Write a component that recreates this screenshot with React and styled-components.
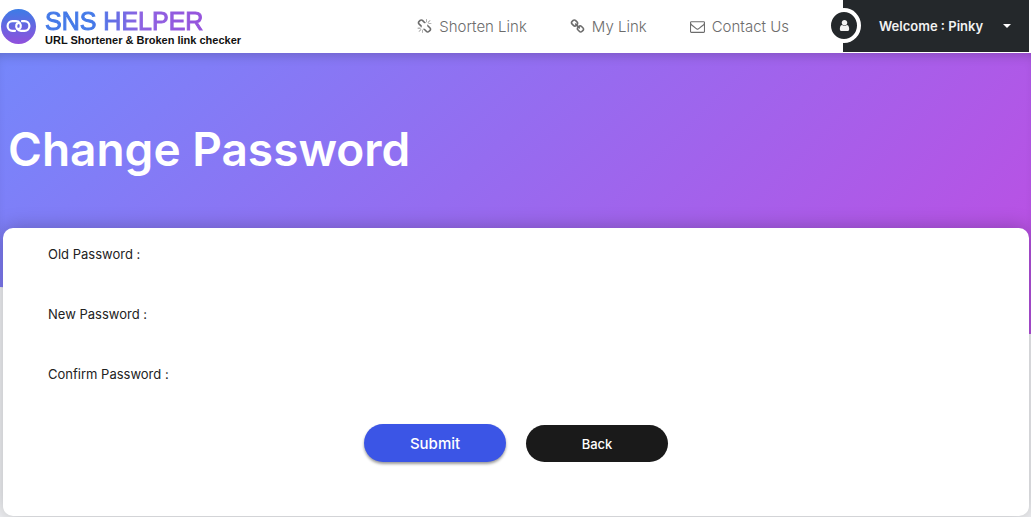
import React from "react";
import styled, { createGlobalStyle } from "styled-components";

const GlobalStyle = createGlobalStyle`
  * {
    box-sizing: border-box;
  }

  body {
    margin: 0;
    background-color: #f0f1f4;
    font-family: Inter, "Open Sans", sans-serif;
  }
`;

const Header = styled.header`
  display: flex;
  align-items: center;
  height: 53px;
  padding-right: 2px;
  background-color: #fff;
`;

const Brand = styled.a`
  display: flex;
  align-items: center;
  gap: 8px;
  margin-right: auto;
  text-decoration: none;
  white-space: nowrap;
`;

const BrandText = styled.span`
  display: flex;
  flex-direction: column;
  font-family: "Liberation Sans", Arial, sans-serif;
`;

const BrandName = styled.span`
  align-self: flex-start;
  background: linear-gradient(90deg, #4379e8 30%, #8d63e2 60%, #9652dc);
  background-clip: text;
  color: transparent;
  font-size: 25px;
  line-height: 26px;
  -webkit-text-stroke: 1px transparent;
`;

const Tagline = styled.span`
  color: #111;
  font-size: 11px;
  font-weight: bold;
  line-height: 12px;
`;

const Nav = styled.nav`
  display: flex;
  gap: 43px;
  margin-right: 54px;
`;

const NavLink = styled.a`
  display: flex;
  align-items: center;
  gap: 7px;
  color: #6c6c6c;
  font-size: 15px;
  font-weight: 300;
  line-height: 24px;
  text-decoration: none;
  white-space: nowrap;
`;

const UserButton = styled.button`
  position: relative;
  display: flex;
  align-items: center;
  align-self: flex-start;
  justify-content: space-between;
  width: 186px;
  height: 52px;
  padding: 0 18px 0 36px;
  border: none;
  background-color: #24282b;
  color: #f2f2f2;
  font-family: inherit;
  font-size: 13px;
  font-weight: 600;
  white-space: nowrap;
`;

const Avatar = styled.span`
  position: absolute;
  top: 8px;
  left: -16px;
  display: flex;
  align-items: center;
  justify-content: center;
  width: 34px;
  height: 35px;
  border: 4px solid #fff;
  border-radius: 50%;
  background-color: #24282b;
`;

const Caret = styled.span`
  border-top: 4px solid #fff;
  border-right: 4px solid transparent;
  border-left: 4px solid transparent;
`;

const Hero = styled.section`
  height: 281px;
  padding: 60px 8px 0;
  background: linear-gradient(135deg, #7587fb, #956cf0 45%, #b852e4 92%);
  box-shadow: inset 0 8px 12px -6px rgba(0, 0, 0, 0.2);
  clip-path: polygon(0 0, 100% 0, 100% 100%, 60% 100%, 0 234px);
`;

const Title = styled.h1`
  margin: 0;
  color: #fff;
  font-size: 46px;
  font-weight: 600;
  line-height: 72px;
`;

const Card = styled.form`
  position: relative;
  margin: -106px 2px 1px 3px;
  padding: 12px 45px 54px;
  border-radius: 10px;
  background-color: #fff;
  box-shadow: 0 0 20px rgba(0, 0, 0, 0.25);
`;

const Field = styled.div`
  display: flex;
  align-items: flex-start;
  height: 60px;
`;

const Label = styled.label`
  flex: 0 0 150px;
  color: #222;
  font-size: 13px;
  line-height: 28px;
`;

const PasswordInput = styled.input`
  flex: 1;
  height: 28px;
  border: none;
  outline: none;
  background: transparent;
`;

const Actions = styled.div`
  display: flex;
  align-items: flex-end;
  justify-content: center;
  gap: 20px;
  margin-top: 4px;
`;

const Button = styled.button`
  width: 142px;
  height: ${(props) => (props.$primary ? "38px" : "37px")};
  border: none;
  border-radius: 19px;
  background-color: ${(props) => (props.$primary ? "#3b55e6" : "#1a1a1a")};
  box-shadow: ${(props) => (props.$primary ? "0 2px 3px rgba(0, 0, 0, 0.4)" : "none")};
  color: #fff;
  font-family: inherit;
  font-size: ${(props) => (props.$primary ? "15px" : "13px")};
  font-weight: 500;
`;

const icons = {
  unlink:
    "M503 1271l-256 256q-10 9-23 9-12 0-23-9-9-10-9-23t9-23l256-256q10-9 23-9t23 9q9 10 9 23t-9 23zm169 41v320q0 14-9 23t-23 9-23-9-9-23v-320q0-14 9-23t23-9 23 9 9 23zm-224-224q0 14-9 23t-23 9h-320q-14 0-23-9t-9-23 9-23 23-9h320q14 0 23 9t9 23zm1264 128q0 120-85 203l-147 146q-83 83-203 83-121 0-204-85l-334-335q-21-21-42-56l239-18 273 274q28 28 68 27.5t68-27.5l147-146q28-28 28-67 0-40-28-68l-274-275 18-239q35 21 56 42l336 336q84 86 84 204zm-617-724l-239 18-273-274q-28-28-68-28-39 0-68 27l-147 146q-28 28-28 67 0 40 28 68l274 274-18 240q-35-21-56-42l-336-336q-84-86-84-204 0-120 85-203l147-146q83-83 203-83 121 0 204 85l334 335q21 21 42 56zm633 84q0 14-9 23t-23 9h-320q-14 0-23-9t-9-23 9-23 23-9h320q14 0 23 9t9 23zm-544-544v320q0 14-9 23t-23 9-23-9-9-23v-320q0-14 9-23t23-9 23 9 9 23zm407 151l-256 256q-11 9-23 9t-23-9q-9-10-9-23t9-23l256-256q10-9 23-9t23 9q9 10 9 23t-9 23z",
  link:
    "M1520 1216q0-40-28-68l-208-208q-28-28-68-28-42 0-72 32 3 3 19 18.5t21.5 21.5 15 19 13 25.5 3.5 27.5q0 40-28 68t-68 28q-15 0-27.5-3.5t-25.5-13-19-15-21.5-21.5-18.5-19q-33 31-33 73 0 40 28 68l206 207q27 27 68 27 40 0 68-26l147-146q28-28 28-67zm-703-705q0-40-28-68l-206-207q-28-28-68-28-39 0-68 27l-147 146q-28 28-28 67 0 40 28 68l208 208q27 27 68 27 42 0 72-31-3-3-19-18.5t-21.5-21.5-15-19-13-25.5-3.5-27.5q0-40 28-68t68-28q15 0 27.5 3.5t25.5 13 19 15 21.5 21.5 18.5 19q33-31 33-73zm895 705q0 120-85 203l-147 146q-83 83-203 83-121 0-204-85l-206-207q-83-83-83-203 0-123 88-209l-88-88q-86 88-208 88-120 0-204-84l-208-208q-84-84-84-204t85-203l147-146q83-83 203-83 121 0 204 85l206 207q83 83 83 203 0 123-88 209l88 88q86-88 208-88 120 0 204 84l208 208q84 84 84 204z",
  envelope:
    "M1664 1504v-768q-32 36-69 66-268 206-426 338-51 43-83 67t-86.5 48.5-102.5 24.5h-2q-48 0-102.5-24.5t-86.5-48.5-83-67q-158-132-426-338-37-30-69-66v768q0 13 9.5 22.5t22.5 9.5h1472q13 0 22.5-9.5t9.5-22.5zm0-1051v-24.5l-.5-13-3-12.5-5.5-9-9-7.5-14-2.5h-1472q-13 0-22.5 9.5t-9.5 22.5q0 168 147 284 193 152 401 317 6 5 35 29.5t46 37.5 44.5 31.5 50.5 27.5 43 9h2q20 0 43-9t50.5-27.5 44.5-31.5 46-37.5 35-29.5q208-165 401-317 54-43 100.5-115.5t46.5-131.5zm128-37v1088q0 66-47 113t-113 47h-1472q-66 0-113-47t-47-113v-1088q0-66 47-113t113-47h1472q66 0 113 47t47 113z",
  user:
    "M1536 1399q0 109-62.5 187t-150.5 78h-854q-88 0-150.5-78t-62.5-187q0-85 8.5-160.5t31.5-152 58.5-131 94-89 134.5-34.5q131 128 313 128t313-128q76 0 134.5 34.5t94 89 58.5 131 31.5 152 8.5 160.5zm-256-887q0 159-112.5 271.5t-271.5 112.5-271.5-112.5-112.5-271.5 112.5-271.5 271.5-112.5 271.5 112.5 112.5 271.5z",
};

const Icon = ({ name, size = 15 }) => (
  <svg width={size} height={size} viewBox="0 0 1792 1792" fill="currentColor" aria-hidden="true">
    <path d={icons[name]} />
  </svg>
);

const Logo = () => (
  <svg width="37" height="37" viewBox="0 0 37 37" aria-hidden="true">
    <defs>
      <linearGradient id="logo" x1="0" y1="0" x2="0" y2="1">
        <stop offset="0" stopColor="#3c7ce6" />
        <stop offset="1" stopColor="#9150dc" />
      </linearGradient>
    </defs>
    <circle cx="18.5" cy="18.5" r="17.5" fill="url(#logo)" />
    <g fill="none" stroke="#fff" strokeWidth="2.2" strokeLinecap="round">
      <path d="M15 22.800h-2.600a4.800 4.800 0 0 1 0-9.600h3.600a4.800 4.800 0 0 1 4.600 6.200q-.6 1.500-2 1.500" />
      <path d="M22 13.200h2.600a4.800 4.800 0 0 1 0 9.600h-3.600a4.800 4.800 0 0 1-4.600-6.200q.6-1.500 2-1.500" />
    </g>
  </svg>
);

const links = [
  { icon: "unlink", text: "Shorten Link" },
  { icon: "link", text: "My Link" },
  { icon: "envelope", text: "Contact Us" },
];

const fields = [
  { id: "oldPassword", label: "Old Password :" },
  { id: "newPassword", label: "New Password :" },
  { id: "confirmPassword", label: "Confirm Password :" },
];

class App extends React.Component {
  state = {
    oldPassword: "",
    newPassword: "",
    confirmPassword: "",
  };

  onChangeField = (event) => {
    this.setState({ [event.target.id]: event.target.value });
  };

  onSubmit = (event) => {
    event.preventDefault();
  };

  render() {
    return (
      <>
        <GlobalStyle />
        <Header>
          <Brand href="#">
            <Logo />
            <BrandText>
              <BrandName>SNS HELPER</BrandName>
              <Tagline>URL Shortener & Broken link checker</Tagline>
            </BrandText>
          </Brand>
          <Nav>
            {links.map((link) => (
              <NavLink key={link.text} href="#">
                <Icon name={link.icon} />
                {link.text}
              </NavLink>
            ))}
          </Nav>
          <UserButton type="button">
            <Avatar>
              <Icon name="user" size={13} />
            </Avatar>
            Welcome : Pinky
            <Caret />
          </UserButton>
        </Header>

        <Hero>
          <Title>Change Password</Title>
        </Hero>

        <Card onSubmit={this.onSubmit}>
          {fields.map((field) => (
            <Field key={field.id}>
              <Label htmlFor={field.id}>{field.label}</Label>
              <PasswordInput
                id={field.id}
                type="password"
                value={this.state[field.id]}
                onChange={this.onChangeField}
              />
            </Field>
          ))}
          <Actions>
            <Button type="submit" $primary>
              Submit
            </Button>
            <Button type="button">Back</Button>
          </Actions>
        </Card>
      </>
    );
  }
}

export default App;
